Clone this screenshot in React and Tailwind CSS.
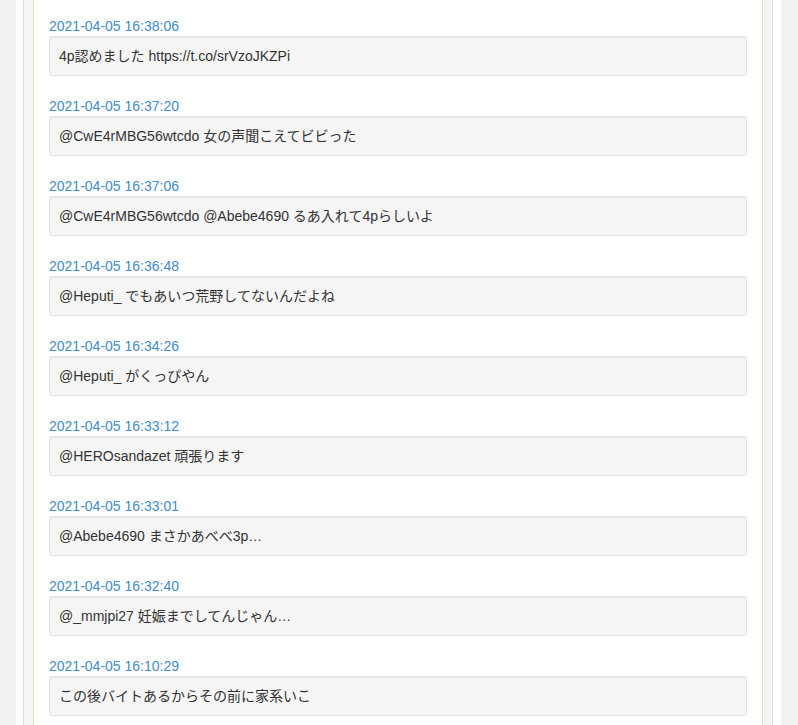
import React from 'react'

const tweets = [
  { time: '2021-04-05 16:38:06', text: '4p認めました https://t.co/srVzoJKZPi' },
  { time: '2021-04-05 16:37:20', text: '@CwE4rMBG56wtcdo 女の声聞こえてビビった' },
  { time: '2021-04-05 16:37:06', text: '@CwE4rMBG56wtcdo @Abebe4690 るあ入れて4pらしいよ' },
  { time: '2021-04-05 16:36:48', text: '@Heputi_ でもあいつ荒野してないんだよね' },
  { time: '2021-04-05 16:34:26', text: '@Heputi_ がくっぴやん' },
  { time: '2021-04-05 16:33:12', text: '@HEROsandazet 頑張ります' },
  { time: '2021-04-05 16:33:01', text: '@Abebe4690 まさかあべべ3p…' },
  { time: '2021-04-05 16:32:40', text: '@_mmjpi27 妊娠までしてんじゃん…' },
  { time: '2021-04-05 16:10:29', text: 'この後バイトあるからその前に家系いこ' },
]

export default function App() {
  return (
    <div
      className="w-[798px] h-[725px] overflow-hidden bg-[#f1f1f1] flex pl-[16px] pr-[17px] text-[14px] leading-[20px] text-[#333]"
      style={{ fontFamily: '"Liberation Sans", Arial, "Noto Sans CJK JP", sans-serif' }}
    >
      <div className="flex-1 bg-white pl-[7px] pr-[8px] flex">
        <div className="flex-1 border-x border-[#dddddd] bg-[#f5f5f5] px-[9px] flex">
          <div className="flex-1 bg-white border-x border-[#d6e9c6] px-[15px] pt-[16px]">
            {tweets.map((t, key) => (
              <div key={'tweet' + key}>
                <div className="text-[#428bca] h-[20px]">{t.time}</div>
                <div className="bg-[#f5f5f5] border border-[#e3e3e3] rounded-[3px] p-[9px] mb-[20px] shadow-[inset_0_1px_1px_rgba(0,0,0,0.05)]">
                  {t.text}
                </div>
              </div>
            ))}
          </div>
        </div>
      </div>
    </div>
  )
}
